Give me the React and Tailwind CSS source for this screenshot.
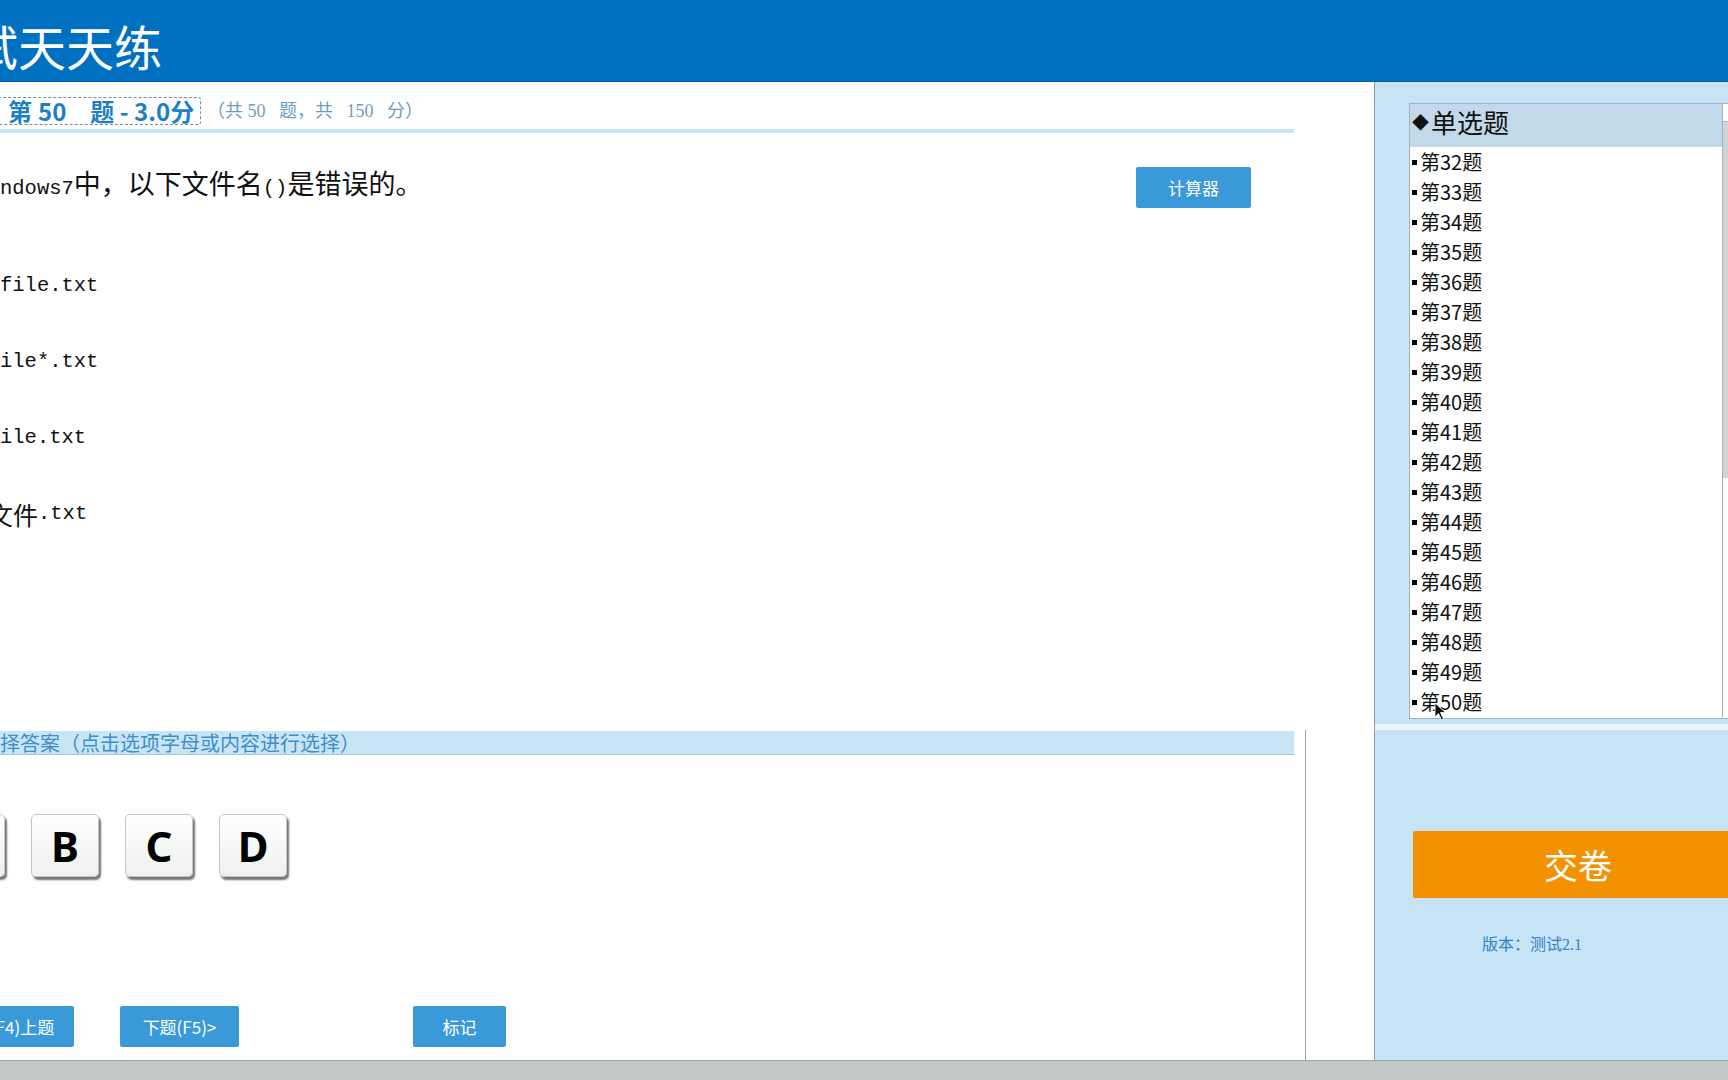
import React from "react";

const mono = "font-['Liberation_Mono','Noto_Sans_CJK_SC',monospace]";
const serif = "font-['Liberation_Serif','Noto_Sans_CJK_SC',serif]";

const questions = Array.from({ length: 19 }, (_, i) => 32 + i);

const Option = ({ children }) => (
  <div className="h-[76px] flex items-center text-[25px] text-[#111] whitespace-pre leading-none">
    {children}
  </div>
);

const Latin = ({ children }) => (
  <span className={`${mono} text-[20.5px]`}>{children}</span>
);

const LetterKey = ({ letter }) => (
  <button className="w-[68px] h-[63px] shrink-0 rounded-[5px] border border-[#c4c7c4] bg-linear-to-b from-white to-[#eef1ee] shadow-[2px_3px_2px_rgba(0,0,0,0.55)] flex items-center justify-center text-[42px] font-bold text-black leading-none font-['Noto_Sans',sans-serif]">
    {letter}
  </button>
);

const BlueButton = ({ children, className }) => (
  <button
    className={`h-[41px] shrink-0 rounded-[2px] bg-[#3a9ad9] text-white text-[17px] leading-none flex items-center justify-center ${className}`}
  >
    {children}
  </button>
);

export default function App() {
  return (
    <div className="w-[1728px] h-[1080px] overflow-hidden flex flex-col bg-white font-['Noto_Sans_CJK_SC',sans-serif]">
      <header className="h-[82px] shrink-0 bg-[#0071c1] border-b border-[#0b5f9e] flex items-center pt-[8px] overflow-hidden">
        <h1 className="ml-[-30px] text-[48px] leading-none text-white whitespace-nowrap">试天天练</h1>
      </header>

      <div className="flex flex-1 min-h-0">
        <main className="w-[1374px] shrink-0 flex flex-col overflow-hidden">
          <section className="h-[648px] shrink-0 flex flex-col">
            <div className="flex items-center pt-[15px]">
              <div className="ml-[-10px] w-[211px] h-[28px] pl-[17px] border border-dashed border-[#7d8a94] rounded-[3px] flex items-center text-[24px] font-bold text-[#1b80c6] leading-none whitespace-nowrap">
                <span>第</span>
                <span className="ml-[6px]">50</span>
                <span className="ml-[24px]">题 - 3.0分</span>
              </div>
              <div className={`${serif} ml-[6px] text-[18px] text-[#6e9cbf] whitespace-pre leading-none`}>
                （共 50   题，共   150   分）
              </div>
            </div>
            <div className="mt-[4px] w-[1294px] h-[4px] bg-[#c9e4f5]" />

            <div className="w-[1294px] pt-[34px] flex items-center">
              <div className="flex-1 pb-[6px] text-[27px] text-[#111] leading-none whitespace-pre">
                <Latin>ndows7</Latin>中，以下文件名<Latin>()</Latin>是错误的。
              </div>
              <BlueButton className="w-[115px] h-[38px] mr-[43px] text-[17px]">计算器</BlueButton>
            </div>

            <div className="mt-[40px] flex flex-col">
              <Option>
                <Latin>file.txt</Latin>
              </Option>
              <Option>
                <Latin>ile*.txt</Latin>
              </Option>
              <Option>
                <Latin>ile.txt</Latin>
              </Option>
              <Option>
                <span className="ml-[-12px]">文件</span>
                <Latin>.txt</Latin>
              </Option>
            </div>
          </section>

          <section className="flex-1 min-h-0">
            <div className="w-[1306px] h-full border-r border-[#a0a4a6] flex flex-col">
              <div className="mt-[1px] w-[1294px] h-[24px] bg-[#c8e5f6] border-b border-[#a3c6da] flex items-center text-[20px] text-[#3f8fcb] leading-none whitespace-nowrap">
                择答案（点击选项字母或内容进行选择）
              </div>

              <div className="mt-[59px] ml-[-63px] flex gap-[26px]">
                <LetterKey letter="A" />
                <LetterKey letter="B" />
                <LetterKey letter="C" />
                <LetterKey letter="D" />
              </div>

              <div className="mt-[129px] flex">
                <BlueButton className="ml-[-30px] w-[104px]">(F4)上题</BlueButton>
                <BlueButton className="ml-[46px] w-[119px]">下题(F5)&gt;</BlueButton>
                <BlueButton className="ml-[174px] w-[93px]">标记</BlueButton>
              </div>
            </div>
          </section>
        </main>

        <aside className="flex-1 min-w-0 border-l border-[#8f9aa2] bg-[#c6e4f6] flex flex-col overflow-hidden">
          <div className="h-[642px] shrink-0 pt-[21px] pl-[34px] flex">
            <div className="w-[314px] h-[616px] shrink-0 border border-[#a3b3bd] bg-white flex flex-col">
              <div className="h-[43px] shrink-0 bg-[#c2d9ea] flex items-center pb-[8px] pl-[2px] text-[26px] text-[#111] leading-none">
                <span className="text-[17px] mr-[2px]">◆</span>
                <span>单选题</span>
              </div>
              {questions.map((n) => (
                <div
                  key={n}
                  className="relative h-[30px] shrink-0 flex items-center text-[20px] text-[#111] leading-none"
                >
                  <span className="ml-[2px] mr-[3px] w-[5px] h-[5px] bg-black" />
                  <span>第{n}题</span>
                  {n === 50 && (
                    <svg
                      className="absolute left-[24px] top-[15px]"
                      width="13"
                      height="19"
                      viewBox="0 0 13 19"
                    >
                      <path d="M1 1 L1 15 L4.5 11.5 L7.5 18 L9.5 17 L6.5 10.5 L11.5 10.5 Z" fill="#111" stroke="#fff" strokeWidth="0.8" />
                    </svg>
                  )}
                </div>
              ))}
            </div>
            <div className="w-[17px] h-[616px] shrink-0 flex flex-col bg-white border-y border-[#a3b3bd]">
              <div className="h-[18px] shrink-0 bg-white border-b border-[#b9b9b9]" />
              <div className="h-[356px] shrink-0 bg-[#d3d3d3]" />
            </div>
          </div>

          <div className="h-[6px] shrink-0 bg-[#eaf4fa]" />

          <div className="flex-1 min-h-0 flex flex-col pt-[101px] pl-[38px]">
            <button className="w-[330px] h-[67px] shrink-0 rounded-[2px] bg-[#f39200] text-white text-[34px] leading-none flex items-center justify-center">
              交卷
            </button>
            <div className={`${serif} mt-[39px] ml-[69px] text-[16px] text-[#3482c2] leading-none`}>
              版本：测试2.1
            </div>
          </div>
        </aside>
      </div>

      <footer className="h-[20px] shrink-0 bg-[#c3c9c6] border-t border-[#9fa5a2]" />
    </div>
  );
}
